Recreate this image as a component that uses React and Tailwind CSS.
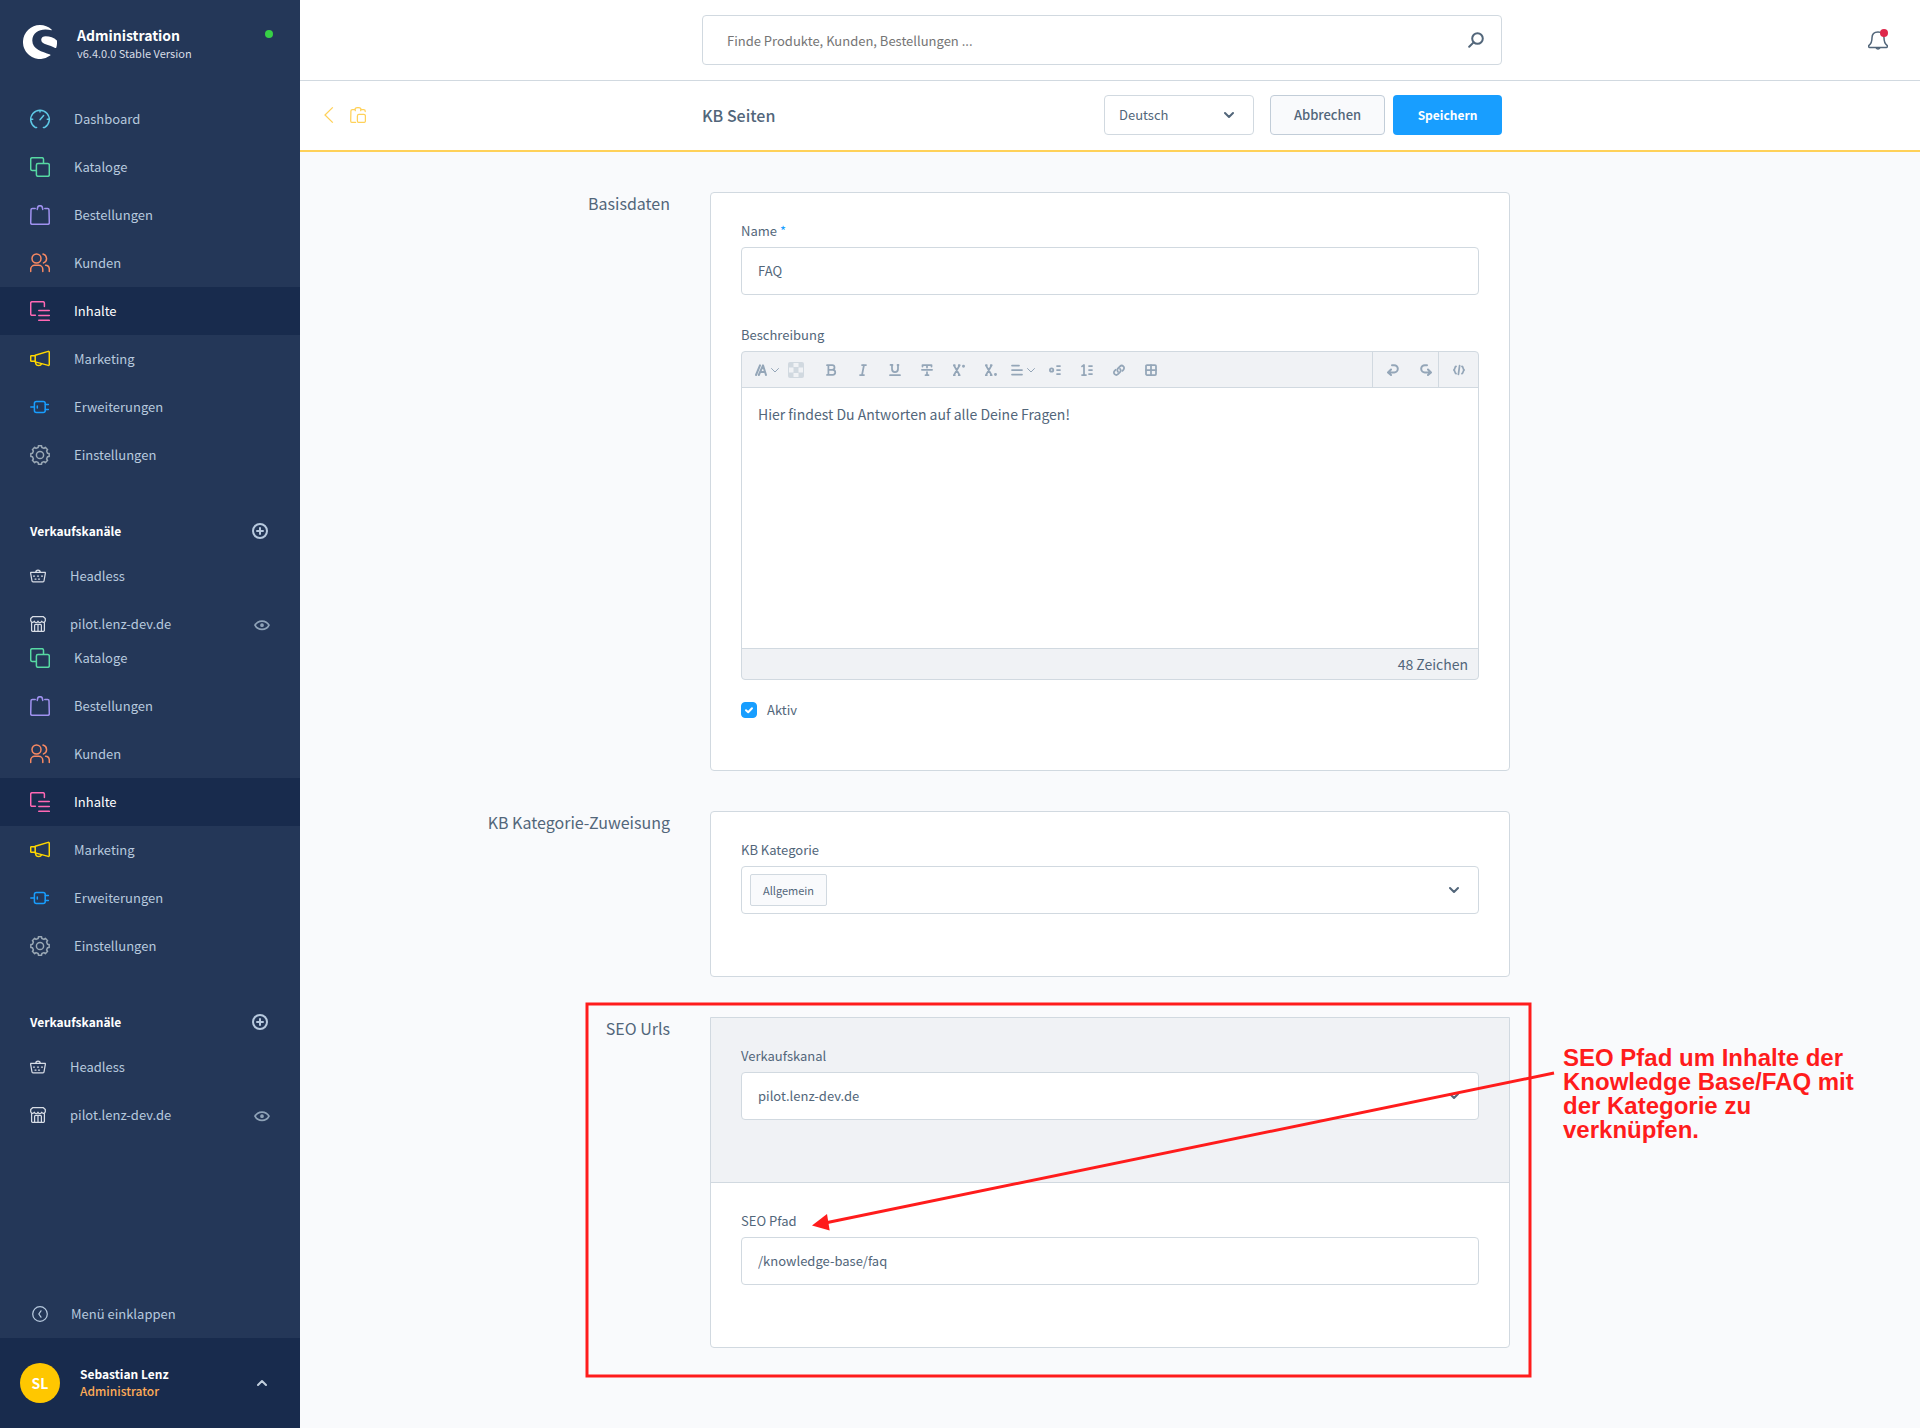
import React, { useState } from 'react';

const Icon = ({ size = 20, className = '', strokeWidth = 1.5, children }) => (
	<svg
		width={size}
		height={size}
		viewBox={`0 0 ${size} ${size}`}
		fill="none"
		stroke="currentColor"
		strokeWidth={strokeWidth}
		strokeLinecap="round"
		strokeLinejoin="round"
		className={`shrink-0 ${className}`}
		aria-hidden="true"
	>
		{children}
	</svg>
);

// outline of the cog, 8 teeth around the center of a 20px box
const gearPoints = Array.from({ length: 8 }, (_, i) => {
	const point = (r, deg) => {
		const a = ((i * 45 + deg) * Math.PI) / 180;
		return `${(10 + r * Math.sin(a)).toFixed(2)},${(10 - r * Math.cos(a)).toFixed(2)}`;
	};
	return [point(7.7, -14), point(9.3, -10), point(9.3, 10), point(7.7, 14)].join(' ');
}).join(' ');

const icons = {
	dashboard: (
		<>
			<path d="M6.6 18.4H5.2a9.3 9.3 0 1 1 9.6 0h-1.4" />
			<path d="M10 1.5v1.6M.9 10.3h1.8M17.3 10.3h1.8M10 10.8l3.6-4.2" />
		</>
	),
	catalogue: (
		<>
			<path d="M6.2 13.5H2.2a1.5 1.5 0 0 1-1.5-1.5V2.2A1.5 1.5 0 0 1 2.200.7H12a1.500 1.500 0 0 1 1.500 1.500v4" />
			<rect x="6.4" y="6.4" width="12.9" height="12.9" rx="1.5" />
		</>
	),
	orders: (
		<>
			<path d="M5.2 3.4H2.4A1.4 1.4 0 0 0 1 4.8L.7 17.8a1.5 1.5 0 0 0 1.500 1.500h15.600a1.500 1.500 0 0 0 1.500-1.500L19 4.8a1.4 1.4 0 0 0-1.4-1.4h-2.8" />
			<path d="M7.3 4.6V3.4h.2a2.5 2.7 0 0 1 5 0h.2v1.2" />
		</>
	),
	customers: (
		<>
			<circle cx="6.5" cy="5.5" r="4.5" />
			<path d="M.7 18.400v-2.200a4 4 0 0 1 4-3.900h4.100a4 4 0 0 1 4 3.900v2.200" />
			<path d="M13 1.100a4.600 4.600 0 0 1 .5 8.800M15.600 12.300a4 4 0 0 1 3.700 3.900v2.200" />
		</>
	),
	content: (
		<>
			<path d="M5.4 14.3H2.1a1.4 1.4 0 0 1-1.400-1.400V2.100A1.400 1.400 0 0 1 2.100.7H13a1.400 1.400 0 0 1 1.400 1.400v3.300" />
			<path d="M8.8 9.500h10.500M8.800 14.400h10.500M8.800 19.300h10.500" />
		</>
	),
	marketing: (
		<>
			<path d="M5.2 6.2 18.2 2.4a.9.9 0 0 1 1.100.8v12.400a.9.9 0 0 1-1.100.8L5.200 12.900Z" />
			<path d="M5.200 6.800H1.300a.6.6 0 0 0-.6.6v4.200a.6.6 0 0 0 .6.6h3.900M5.600 13c0 2 1.200 3.600 3.200 3.600 1.500 0 2.400-.8 2.800-1.800" />
		</>
	),
	extensions: (
		<>
			<rect x="4.4" y="4.6" width="10.8" height="10.8" rx="2" />
			<path d="M.8 10h3.400M15.400 7.600h3M15.400 12.400h3M7.300 9v2" />
		</>
	),
	settings: (
		<>
			<polygon points={gearPoints} />
			<circle cx="10" cy="10" r="3.600" />
		</>
	),
};

const menuItems = [
	{ label: 'Dashboard', icon: 'dashboard', color: 'text-[#5ec8e5]' },
	{ label: 'Kataloge', icon: 'catalogue', color: 'text-[#57d9a3]' },
	{ label: 'Bestellungen', icon: 'orders', color: 'text-[#a092f0]' },
	{ label: 'Kunden', icon: 'customers', color: 'text-[#f88962]' },
	{ label: 'Inhalte', icon: 'content', color: 'text-[#ff68b4]', active: true },
	{ label: 'Marketing', icon: 'marketing', color: 'text-[#ffd700]' },
	{ label: 'Erweiterungen', icon: 'extensions', color: 'text-[#189eff]' },
	{ label: 'Einstellungen', icon: 'settings', color: 'text-[#9aa8b5]' },
];

const MenuList = ({ items }) => (
	<ul>
		{items.map((item) => (
			<li key={item.label}>
				<a
					href="#"
					className={`flex h-12 items-center gap-6 pl-[30px] ${item.active ? 'bg-[#182b4d] text-white' : 'text-[#b7c9de]'}`}
				>
					<Icon className={item.color}>{icons[item.icon]}</Icon>
					<span>{item.label}</span>
				</a>
			</li>
		))}
	</ul>
);

const SalesChannels = () => (
	<div className="pt-[30px]">
		<div className="flex h-[43px] items-center justify-between pr-8 pl-[30px]">
			<span className="text-xs leading-4 font-bold text-white">Verkaufskanäle</span>
			<button type="button" aria-label="Verkaufskanal hinzufügen" className="text-[#b7c9de]">
				<Icon size={16} strokeWidth={2}>
					<circle cx="8" cy="8" r="7" />
					<path d="M8 5v6M5 8h6" />
				</Icon>
			</button>
		</div>
		<ul className="text-[#b7c9de]">
			<li>
				<a href="#" className="flex h-12 items-center gap-6 pl-[30px]">
					<Icon size={16} strokeWidth={1.25} className="text-[#d8dde6]">
						<path d="M.7 4.3h14.6v1.4L14 13a1 1 0 0 1-1 .9H3A1 1 0 0 1 2 13L.7 5.7ZM5.800 4.300a2.200 2.200 0 0 1 4.400 0" />
						<path d="M3.500 8h1M7.500 8h1M11.500 8h1M5 11h1M8.500 11h1" />
					</Icon>
					<span>Headless</span>
				</a>
			</li>
			<li className="flex h-12 items-center justify-between pr-[30px]">
				<a href="#" className="flex items-center gap-6 pl-[30px]">
					<Icon size={16} strokeWidth={1.25} className="text-[#d8dde6]">
						<path d="M1.600 6.600v7.600a1.200 1.200 0 0 0 1.200 1.200h10.400a1.200 1.200 0 0 0 1.200-1.200V6.600" />
						<path d="M2.600.7h10.800l1.900 1.800v2.200a1.900 1.900 0 0 1-3.600.5 1.900 1.900 0 0 1-3.700 0 1.900 1.900 0 0 1-3.700 0A1.900 1.900 0 0 1 .7 4.700V2.500Z" />
						<path d="M4.600 15.400V9.400a1 1 0 0 1 1-1h4.800a1 1 0 0 1 1 1v6M8 8.400v7" />
					</Icon>
					<span>pilot.lenz-dev.de</span>
				</a>
				<button type="button" aria-label="Storefront öffnen" className="text-[#8fa3b8]">
					<Icon size={16} strokeWidth={1.75}>
						<path d="M1 9.200C2.400 6.500 5 5 8 5s5.600 1.500 7 4.200C13.600 12 11 13.400 8 13.400S2.400 12 1 9.200Z" />
						<circle cx="8" cy="9.200" r="1" fill="currentColor" />
					</Icon>
				</button>
			</li>
		</ul>
	</div>
);

const Sidebar = () => (
	<aside className="flex w-[300px] shrink-0 flex-col bg-[#243758] text-[13px] leading-4">
		<div className="flex h-[95px] items-start pt-[25px] pr-[27px] pl-[23px]">
			<svg width="34" height="34" viewBox="0 0 34 34" fill="#fff" className="shrink-0" aria-hidden="true">
				<path d="M28.6 4.600A17 17 0 1 0 27.200 30.600c.4-.3.300-.8-.1-1C19 26.300 9.300 24.500 9.300 15.400 9.300 8 16 4.300 22.500 4.400c2 0 4 .2 5.900.9.400.1.500-.4.200-.7Z" />
				<path d="M33.900 15.400C30.800 12.300 27 11.200 22.600 11.200c-2.200 0-4.400 1-4.400 3.500 0 5 9.200 5 13.900 8.200.5.300 1 .2 1.200-.4.700-2.300.9-4.700.6-7.100Z" />
			</svg>
			<div className="ml-5 flex-1">
				<p className="text-sm leading-5 font-bold text-white">Administration</p>
				<p className="text-[11px] leading-4 text-[#d8dde6]">v6.4.0.0 Stable Version</p>
			</div>
			<span className="mt-[5px] size-2 rounded-full bg-[#37d046]" />
		</div>

		<MenuList items={menuItems} />
		<SalesChannels />

		<div className="-mt-3.5">
			<MenuList items={menuItems.slice(1)} />
		</div>
		<SalesChannels />

		<button type="button" className="mt-auto flex h-12 items-center gap-[23px] pl-8 text-[#b7c9de]">
			<Icon size={16} strokeWidth={1.25}>
				<circle cx="8" cy="8" r="7.300" />
				<path d="M9 4.800 6.800 8 9 11.200" />
			</Icon>
			<span>Menü einklappen</span>
		</button>
		<div className="flex h-[90px] items-center bg-[#182b4d] pr-[33px] pl-5">
			<span className="flex size-10 items-center justify-center rounded-full bg-[#ffc700] text-sm font-bold text-white">SL</span>
			<div className="ml-5 flex-1">
				<p className="text-xs leading-4 font-bold text-white">Sebastian Lenz</p>
				<p className="text-xs leading-[18px] font-medium text-[#ffab57]">Administrator</p>
			</div>
			<button type="button" aria-label="Benutzermenü" className="text-[#c2cfdd]">
				<Icon size={10} strokeWidth={2}>
					<path d="m1 7 4-4 4 4" />
				</Icon>
			</button>
		</div>
	</aside>
);

const Topbar = () => (
	<header className="grid h-[81px] grid-cols-[1fr_minmax(0,800px)_1fr] items-center border-b border-[#d1d9e0] bg-white pr-4">
		<div />
		<div className="flex h-[50px] items-center rounded border border-[#d1d9e0] pr-[17px] pl-6">
			<input
				type="search"
				aria-label="Suche"
				placeholder="Finde Produkte, Kunden, Bestellungen ..."
				className="h-full min-w-0 flex-1 text-[13px] outline-none placeholder:text-[#757575]"
			/>
			<button type="button" aria-label="Suchen" className="text-[#52667a]">
				<Icon size={16} strokeWidth={2}>
					<circle cx="9.500" cy="6.500" r="5.300" />
					<path d="m5.600 10.400-4.400 4.400" />
				</Icon>
			</button>
		</div>
		<button type="button" aria-label="Benachrichtigungen" className="relative mr-4 justify-self-end text-[#52667a]">
			<Icon size={20}>
				<path d="M10 1.900C6.200 1.900 4 4.400 4 7.800c0 4.200-.8 6-3 7.600-.7.600-.3 2 .6 2h16.800c.9 0 1.300-1.400.6-2-2.200-1.600-3-3.400-3-7.600 0-3.400-2.200-5.900-6-5.900Z" />
				<path d="M8.300 17.900a1.800 1.500 0 0 0 3.400 0" />
			</Icon>
			<span className="absolute -top-px right-0 size-2 rounded-full bg-[#de294c]" />
		</button>
	</header>
);

const ChevronDown = ({ className = '' }) => (
	<Icon size={10} strokeWidth={2} className={`text-[#52667a] ${className}`}>
		<path d="m1 3 4 4 4-4" />
	</Icon>
);

const SmartBar = () => (
	<div className="grid h-[71px] grid-cols-[1fr_minmax(0,800px)_1fr] items-center border-b-2 border-[#ffd159] bg-white pr-4 pb-px">
		<div className="flex items-center gap-4 pl-6 text-[#ffd159]">
			<a href="#" aria-label="Zurück">
				<svg width="10" height="16" viewBox="0 0 10 16" fill="none" stroke="currentColor" strokeWidth="1.25" aria-hidden="true">
					<path d="M8.800.4 1 8l7.800 7.600" />
				</svg>
			</a>
			<Icon size={16} strokeWidth={1.25}>
				<path d="M5.600 15.400H2.100A1.500 1.500 0 0 1 .7 13.900l.2-9.800a1.500 1.500 0 0 1 1.500-1.500H5a3 2 0 0 1 6 0h2.700a1.500 1.500 0 0 1 1.500 1.500v.5M5.300 2.600v1.100M10.700 2.600v1.100" />
				<rect x="7.400" y="7.400" width="8" height="8" rx="1.500" />
			</Icon>
		</div>
		<div className="flex items-center">
			<h1 className="flex-1 text-base font-medium">KB Seiten</h1>
			<div className="relative mr-4">
				<select aria-label="Sprache" className="block h-10 w-[150px] appearance-none rounded border border-[#d1d9e0] bg-white pl-3.5 text-[13px] outline-none">
					<option>Deutsch</option>
				</select>
				<ChevronDown className="pointer-events-none absolute top-[15px] right-5" />
			</div>
			<button type="button" className="mr-2 h-10 w-[115px] rounded border border-[#c2cdd8] bg-[#f9fafc] text-[13px] font-medium">
				Abbrechen
			</button>
			<button type="button" className="h-10 w-[109px] rounded bg-[#189eff] text-xs font-bold text-white">
				Speichern
			</button>
		</div>
	</div>
);

const Section = ({ title, children }) => (
	<section className="grid grid-cols-[1fr_minmax(0,800px)_1fr] gap-10">
		<h2 className="text-right text-base leading-[22px]">{title}</h2>
		{children}
	</section>
);

const ToolButton = ({ label, className = 'w-8', children }) => (
	<button type="button" aria-label={label} className={`flex h-9 items-center justify-center ${className}`}>
		{children}
	</button>
);

const crossShape = <path d="m1 1.500 5.500 9.500M6.500 1.500 1 11M.8 1.200h1M5.700 1.200h1M.8 11.200h1M5.700 11.200h1" />;

const toolbarIcons = [
	['Fett', <path d="M2 1.200h5.200a2.300 2.300 0 0 1 0 4.600H3.200M2 10.900h5.700a2.500 2.500 0 0 0 0-5.100M3.400 1.200v9.700" />],
	['Kursiv', <path d="M5 1h4M3 11h4M7 1 5 11" />],
	['Unterstrichen', <path d="M1.500.9h2M8.500.9h1M3 .9v4.200a3 3 0 0 0 6 0V.9M1 11.200h10" />],
	['Durchgestrichen', <path d="M1.500 2.500V1h9v1.500M6 1v2.500M.9 5.800h10.200M6 8v3M4.500 11.200h3" />],
	['Hochgestellt', <>{crossShape}<circle cx="10.500" cy="2.200" r=".6" fill="currentColor" /></>],
	['Tiefgestellt', <>{crossShape}<circle cx="10.500" cy="10.500" r=".6" fill="currentColor" /></>],
];

const listIcons = [
	['Liste', <><circle cx="2.600" cy="6" r="1.700" /><path d="M8 2h3M8 6h3M8 10h3" /></>],
	['Nummerierte Liste', <path d="M1 2.400 3 1v10M1 11h4M8 2h3M8 6h3M8 10h3" />],
	['Link', <><path d="M5 7.800a2.400 2.400 0 0 1 0-3.400l2-2a2.400 2.400 0 0 1 3.400 3.400l-1 1" /><path d="M7 4.800a2.400 2.400 0 0 1 0 3.400l-2 2a2.400 2.400 0 0 1-3.400-3.400l1-1" /></>],
	['Tabelle', <><rect x="1" y="1" width="10" height="10" rx="1" /><path d="M6 1v10M1 6h10" /></>],
];

const ThinChevron = () => (
	<Icon size={8} strokeWidth={1}>
		<path d="m.5 2.500 3.500 3.500 3.500-3.500" />
	</Icon>
);

const EditorToolbar = () => (
	<div className="flex h-[35px] items-stretch text-[#94a6b8]">
		<div className="flex flex-1 items-center pl-[9px]">
			<ToolButton label="Format" className="w-8 gap-1">
				<Icon size={12} strokeWidth={2}>
					<path d="m1 11 4-9.700M3.800 11 8 1.300l3 9.700M5.500 8h4.500" />
				</Icon>
				<ThinChevron />
			</ToolButton>
			<ToolButton label="Textfarbe" className="mr-1.5 w-[26px]">
				<svg width="16" height="16" viewBox="0 0 16 16" aria-hidden="true">
					<rect width="16" height="16" rx="2" fill="#d1d9e0" />
					<path d="M5.500 1h5v4h-5zM1 5.500h4.500v5H1zM10.500 5.500H15v5h-4.500zM5.500 11h5v4h-5z" fill="#f0f2f5" />
				</svg>
			</ToolButton>
			{toolbarIcons.map(([label, shape]) => (
				<ToolButton key={label} label={label}>
					<Icon size={12} strokeWidth={1.75}>{shape}</Icon>
				</ToolButton>
			))}
			<ToolButton label="Ausrichtung" className="w-8 gap-1">
				<Icon size={12} strokeWidth={1.75}>
					<path d="M1 1.500h7M1 6h10M1 10.500h10" />
				</Icon>
				<ThinChevron />
			</ToolButton>
			{listIcons.map(([label, shape]) => (
				<ToolButton key={label} label={label}>
					<Icon size={12} strokeWidth={1.75}>{shape}</Icon>
				</ToolButton>
			))}
		</div>
		<div className="flex items-center gap-[21px] border-l border-[#d1d9e0] pr-1.5 pl-3.5">
			<button type="button" aria-label="Rückgängig">
				<Icon size={12} strokeWidth={2}>
					<path d="M5 1.200h2.200a3.600 3.600 0 0 1 0 7.200H1.500M4 5.500l-3 3 3 2.500" />
				</Icon>
			</button>
			<button type="button" aria-label="Wiederholen">
				<Icon size={12} strokeWidth={2}>
					<path d="M7 1.200H4.800a3.600 3.600 0 0 0 0 7.200h5.700M8 5.500l3 3-3 2.500" />
				</Icon>
			</button>
		</div>
		<div className="flex w-10 items-center justify-center border-l border-[#d1d9e0]">
			<button type="button" aria-label="Code">
				<Icon size={12} strokeWidth={1.75}>
					<path d="M3 2.400C1.500 3 2.300 5 .9 6c1.400 1 .6 3 2.100 3.600M9 2.400c1.500.6.700 2.600 2.100 3.600-1.400 1-.6 3-2.100 3.600M6.600 1.600 5.400 10.400" />
				</Icon>
			</button>
		</div>
	</div>
);

const fieldClass = 'h-12 w-full rounded border border-[#d1d9e0] bg-white px-4 text-[13px] outline-none';
const inputClass = `${fieldClass} pb-0.5`;
const labelClass = 'mb-2 block text-[13px] leading-4';

const BaseDataCard = () => {
	const [name, setName] = useState('FAQ');
	const [description, setDescription] = useState('Hier findest Du Antworten auf alle Deine Fragen!');
	const [active, setActive] = useState(true);

	return (
		<div className="rounded border border-[#d1d9e0] bg-white px-[30px] pt-[30px] pb-[52px]">
			<label htmlFor="name" className={labelClass}>
				Name <span className="text-[#189eff]">*</span>
			</label>
			<input id="name" type="text" value={name} onChange={(e) => setName(e.target.value)} className={inputClass} />

			<label htmlFor="description" className={`mt-8 ${labelClass}`}>Beschreibung</label>
			<div className="overflow-hidden rounded border border-[#d1d9e0] bg-[#f0f2f5]">
				<EditorToolbar />
				<textarea
					id="description"
					value={description}
					onChange={(e) => setDescription(e.target.value)}
					className="block h-[262px] w-full resize-none border-y border-[#d1d9e0] bg-white px-4 py-3.5 text-sm leading-6 outline-none"
				/>
				<p className="pr-2.5 text-right text-sm leading-[30px]">{description.length} Zeichen</p>
			</div>

			<div className="mt-[22px] flex h-4 items-center gap-2.5">
				<span className="relative size-4">
					<input
						id="active"
						type="checkbox"
						checked={active}
						onChange={(e) => setActive(e.target.checked)}
						className="block size-4 appearance-none rounded border border-[#d1d9e0] bg-white checked:border-[#189eff] checked:bg-[#189eff]"
					/>
					<Icon size={16} strokeWidth={2} className="pointer-events-none absolute inset-0 text-white">
						<path d="m5 8.200 2.200 2L11 6.200" />
					</Icon>
				</span>
				<label htmlFor="active" className="text-[13px] leading-4">Aktiv</label>
			</div>
		</div>
	);
};

const CategoryCard = () => (
	<div className="rounded border border-[#d1d9e0] bg-white px-[30px] pt-[30px] pb-[62px]">
		<label htmlFor="category" className={labelClass}>KB Kategorie</label>
		<div className="flex h-12 items-center rounded border border-[#d1d9e0] pr-[19px] pl-2">
			<span className="flex h-8 items-center rounded-xs border border-[#d1d9e0] bg-[#f9fafc] px-3 text-[11px]">Allgemein</span>
			<input id="category" type="text" className="h-full min-w-0 flex-1 px-2 text-[13px] outline-none" />
			<ChevronDown />
		</div>
	</div>
);

// red marker frame, arrow and hint text on top of the SEO card
const SeoHint = () => (
	<>
		<svg
			width="970"
			height="378"
			viewBox="0 0 970 378"
			className="pointer-events-none absolute -top-4 -left-[125px] max-w-none"
			aria-hidden="true"
		>
			<rect x="2" y="3" width="943" height="372" fill="none" stroke="#ff1c1c" strokeWidth="3" />
			<path d="M969 72 240 222" stroke="#ff1c1c" strokeWidth="3" />
			<path d="M227 224.500 242 213l2.700 16.500Z" fill="#ff1c1c" />
		</svg>
		<p className="absolute top-[29px] left-[853px] w-[300px] font-['Liberation_Sans',Arial,sans-serif] text-2xl leading-6 font-bold text-[#ff1c1c]">
			SEO Pfad um Inhalte der Knowledge Base/FAQ mit der Kategorie zu verknüpfen.
		</p>
	</>
);

const SeoCard = () => {
	const [path, setPath] = useState('/knowledge-base/faq');

	return (
		<div className="relative">
			<div className="rounded-b border border-[#d1d9e0] bg-white">
				<div className="border-b border-[#d1d9e0] bg-[#f0f2f5] px-[30px] pt-[30px] pb-[62px]">
					<label htmlFor="channel" className={labelClass}>Verkaufskanal</label>
					<div className="relative">
						<select id="channel" className={`appearance-none ${fieldClass}`}>
							<option>pilot.lenz-dev.de</option>
						</select>
						<ChevronDown className="pointer-events-none absolute top-[19px] right-5" />
					</div>
				</div>
				<div className="px-[30px] pt-[30px] pb-[62px]">
					<label htmlFor="path" className={labelClass}>SEO Pfad</label>
					<input id="path" type="text" value={path} onChange={(e) => setPath(e.target.value)} className={inputClass} />
				</div>
			</div>
			<SeoHint />
		</div>
	);
};

const App = () => {
	return (
		<div className="flex min-h-screen bg-[#f9fafc] font-['Source_Sans_Pro','Noto_Sans_CJK_SC',sans-serif] text-[#52667a]">
			<Sidebar />
			<div className="min-w-0 flex-1">
				<Topbar />
				<SmartBar />
				<main className="flex flex-col gap-10 py-10">
					<Section title="Basisdaten">
						<BaseDataCard />
					</Section>
					<Section title="KB Kategorie-Zuweisung">
						<CategoryCard />
					</Section>
					<Section title="SEO Urls">
						<SeoCard />
					</Section>
				</main>
			</div>
		</div>
	);
};

export default App;
